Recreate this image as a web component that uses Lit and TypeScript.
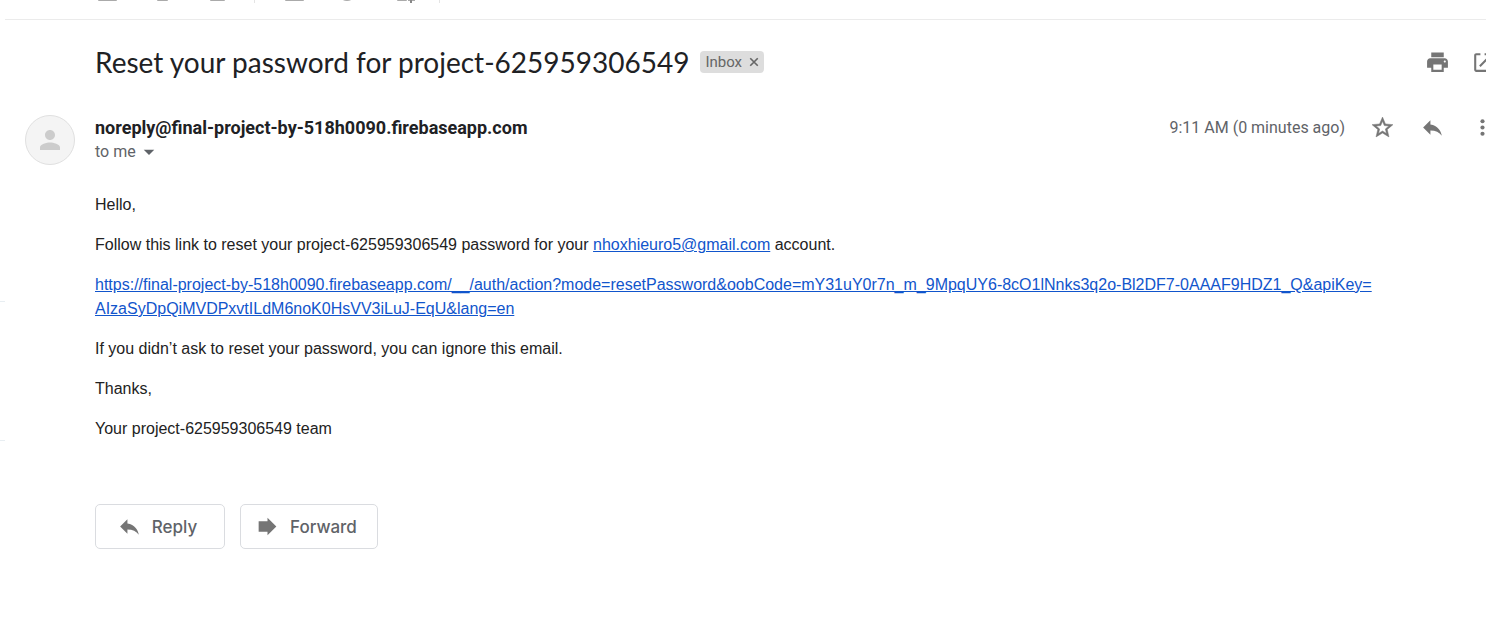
import { LitElement, html, css, svg } from "lit";
import { customElement } from "lit/decorators.js";

const icon = (content: unknown, cls = "icon") =>
  html`<svg class=${cls} viewBox="0 0 24 24" aria-hidden="true">${content}</svg>`;

const printer = svg`<path d="M19 8H5c-1.660 0-3 1.340-3 3v6h4v4h12v-4h4v-6c0-1.660-1.340-3-3-3zm-3 11H8v-5h8v5zm3-7c-.55 0-1-.45-1-1s.45-1 1-1 1 .45 1 1-.45 1-1 1zM18 2.500H6V7h12V2.500z"/>`;
const openNew = svg`<path d="M20 19H6V5h4V3H6c-1.110 0-2 .9-2 2v14c0 1.100.89 2 2 2h14c1.100 0 2-.9 2-2v-7h-2v7zM14 3v2h4.590l-9.830 9.830 1.410 1.410L20 6.410V10h2V3h-8z"/>`;
const star = svg`<path stroke="currentColor" stroke-width=".5" d="M22 9.240l-7.190-.62L12 2 9.190 8.630 2 9.240l5.460 4.730L5.820 21 12 17.270 18.180 21l-1.630-7.030L22 9.240zM12 15.400l-3.760 2.270 1-4.280-3.320-2.880 4.380-.38L12 6.100l1.710 4.040 4.380.38-3.320 2.880 1 4.280L12 15.400z"/>`;
const reply = svg`<path d="M10 9V5l-7 7 7 7v-4.100c5 0 8.500 1.600 11 5.100-1-5-4-10-11-11z"/>`;
const forward = svg`<path d="M3.500 7H12V3.500l8.500 8.500-8.500 8.500V17H3.500z"/>`;
const dots = svg`<circle cx="12" cy="6" r="2"/><circle cx="12" cy="12" r="2"/><circle cx="12" cy="18" r="2"/>`;
const person = svg`<path d="M12 12c2.210 0 4-1.790 4-4s-1.790-4-4-4-4 1.790-4 4 1.790 4 4 4zm0 2c-2.670 0-8 1.340-8 4v2h16v-2c0-2.660-5.330-4-8-4z"/>`;
const caret = svg`<path d="M3 8h18l-9 9z"/>`;
const cross = svg`<path d="M3 3l18 18M21 3L3 21" fill="none" stroke="currentColor" stroke-width="4"/>`;

@customElement("app-root")
export class AppRoot extends LitElement {
  static styles = css`
    :host {
      display: grid;
      grid-template-columns: 5px minmax(0, 1fr);
      min-height: 100vh;
      overflow: hidden;
      box-sizing: border-box;
      background: #fff;
      color: #202124;
      font-family: Roboto, sans-serif;
    }
    button { font: inherit; color: inherit; background: none; border: 0; padding: 0; margin: 0; cursor: pointer; }
    .rail { display: flex; flex-direction: column; padding-top: 301px; gap: 138px; }
    .rail i { height: 1px; background: #e8eef2; }
    .toolbar {
      height: 19px;
      padding-left: 88px;
      display: flex;
      align-items: flex-start;
      border-bottom: 1px solid #ebebeb;
    }
    .toolbar svg { display: block; width: 360px; height: 4px; }
    .message { padding: 19px 0 0 20px; }
    .row { display: grid; grid-template-columns: 50px minmax(0, 1fr) auto; column-gap: 20px; }
    .heading { grid-column: 2; display: flex; align-items: center; gap: 11px; height: 45px; }
    h1 { margin: 0; font: 400 28px/36px "Lato", sans-serif; }
    .label { display: flex; align-items: center; gap: 7px; height: 22px; padding: 0 5px; border-radius: 4px; background: #ddd; color: #666; font-size: 15px; }
    .label .icon { width: 10px; height: 10px; }
    .icon { display: block; width: 25px; height: 25px; fill: currentColor; flex: none; }
    .actions { display: flex; align-items: center; gap: 25px; margin-right: -9px; color: #757575; }
    .tools { gap: 20px; height: 47px; }
    .sender { margin-top: 29px; }
    .avatar { box-sizing: border-box; width: 50px; height: 50px; border: 1px solid #e0e0e0; border-radius: 50%; background: #f4f4f4; color: #ccc; display: grid; place-items: center; }
    .avatar .icon { width: 30px; height: 30px; }
    .from { font-weight: 700; font-size: 18px; line-height: 26px; }
    .to { display: flex; align-items: center; gap: 6px; font-size: 16px; line-height: 22px; color: #5f6368; }
    .to .icon { width: 14px; height: 14px; }
    .meta { height: 25px; }
    time { font-size: 16px; line-height: 24px; color: #5f6368; }
    .body { margin: 28px 90px 0 70px; font: 16px/24px "Liberation Sans", Arial, sans-serif; color: #222; }
    .body p { margin: 0 0 16px; }
    a { color: #15c; }
    .replies { display: flex; gap: 15px; margin: 63px 0 0 70px; }
    .replies button { display: flex; align-items: center; justify-content: center; gap: 10px; box-sizing: border-box; min-width: 130px; height: 45px; padding: 0 20px 0 14px; border: 1px solid #dadce0; border-radius: 5px; font: 500 17px/24px "Inter", sans-serif; color: #5f6368; }
    .replies .icon { color: #757575; }
  `;

  render() {
    return html`
      <div class="rail"><i></i><i></i></div>
      <main>
        <div class="toolbar">
          <svg viewBox="0 0 360 4" aria-hidden="true">
            <g fill="#aaa">
              <rect x="5" y="-4" width="19" height="5" rx="1" />
              <rect x="64" y="-4" width="11" height="5" rx="1" />
              <rect x="117" y="-4" width="15" height="5" rx="1" />
              <rect x="192" y="-4" width="19" height="5" rx="1" />
              <circle cx="254" cy="-8" r="9" />
              <rect x="304" y="-4" width="10" height="5" rx="1" />
              <rect x="315" y="-1" width="7" height="2" />
              <rect x="317" y="-1" width="2" height="4" fill="#888" />
            </g>
            <path d="M161.500 0v3M346.500 0v3" stroke="#e4e4e4" />
          </svg>
        </div>
        <article class="message">
          <header class="row">
            <div class="heading">
              <h1>Reset your password for project-625959306549</h1>
              <span class="label">Inbox <button aria-label="Remove label Inbox">${icon(cross)}</button></span>
            </div>
            <div class="actions tools">
              <button aria-label="Print">${icon(printer)}</button>
              <button aria-label="Open in new window">${icon(openNew)}</button>
            </div>
          </header>
          <div class="row sender">
            <div class="avatar">${icon(person)}</div>
            <div>
              <div class="from">noreply@final-project-by-518h0090.firebaseapp.com</div>
              <button class="to" aria-label="Show details">to me ${icon(caret)}</button>
            </div>
            <div class="actions meta">
              <time>9:11 AM (0 minutes ago)</time>
              <button aria-label="Star">${icon(star)}</button>
              <button aria-label="Reply">${icon(reply)}</button>
              <button aria-label="More">${icon(dots)}</button>
            </div>
          </div>
          <div class="body">
            <p>Hello,</p>
            <p>Follow this link to reset your project-625959306549 password for your <a href="mailto:nhoxhieuro5@gmail.com">nhoxhieuro5@gmail.com</a> account.</p>
            <p><a href="#reset">https://final-project-by-518h0090.firebaseapp.com/__/auth/action?mode=resetPassword&amp;oobCode=mY31uY0r7n_m_9MpqUY6-8cO1lNnks3q2o-Bl2DF7-0AAAF9HDZ1_Q&amp;apiKey=<wbr>AIzaSyDpQiMVDPxvtILdM6noK0HsVV3iLuJ-EqU&amp;lang=en</a></p>
            <p>If you didn’t ask to reset your password, you can ignore this email.</p>
            <p>Thanks,</p>
            <p>Your project-625959306549 team</p>
          </div>
          <div class="replies">
            <button>${icon(reply)}Reply</button>
            <button>${icon(forward)}Forward</button>
          </div>
        </article>
      </main>
    `;
  }
}
